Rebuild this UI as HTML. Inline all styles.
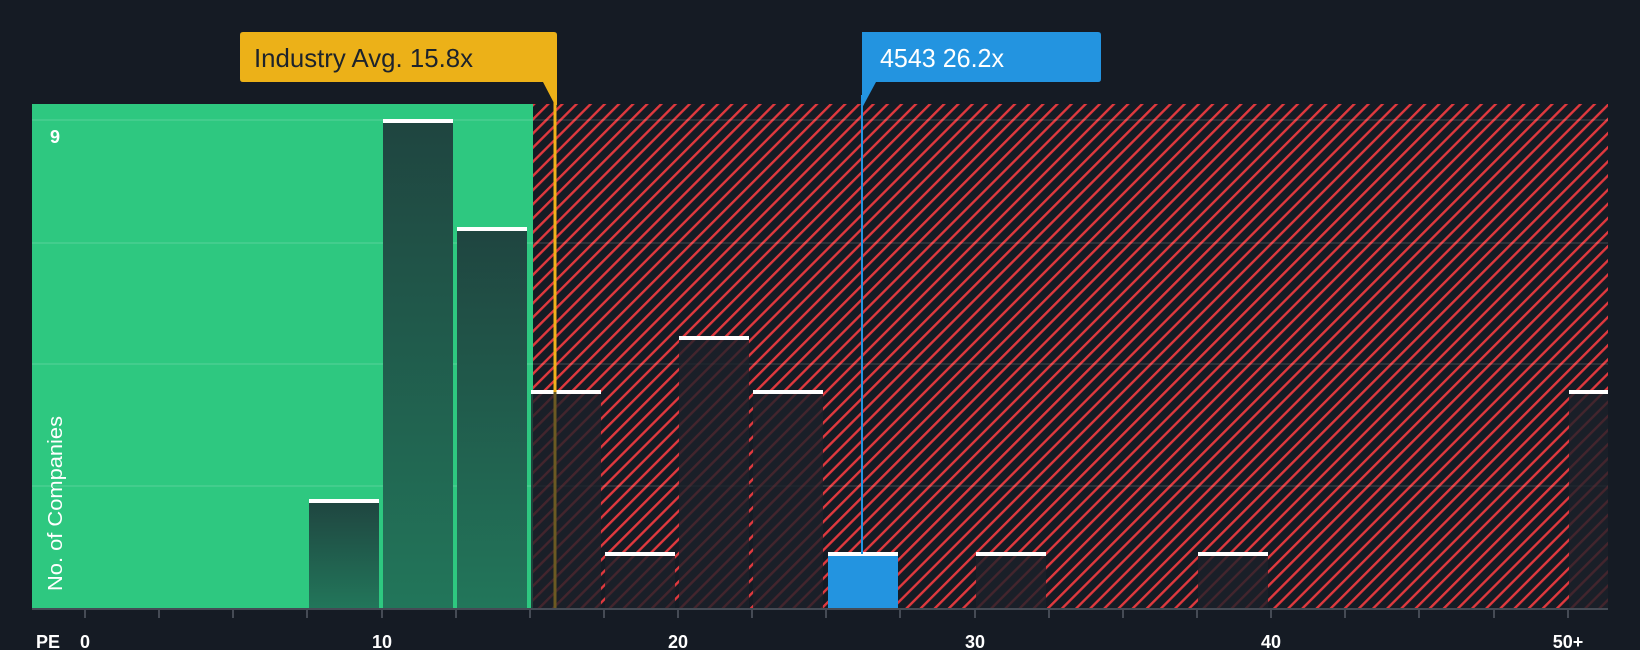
<!DOCTYPE html>
<html><head><meta charset="utf-8"><style>
html,body{margin:0;padding:0;background:#151b24;width:1640px;height:650px;overflow:hidden}
svg{display:block}
text{font-family:"Liberation Sans",sans-serif}
</style></head><body>
<svg width="1640" height="650" viewBox="0 0 1640 650" xmlns="http://www.w3.org/2000/svg">
<defs>
<pattern id="h" patternUnits="userSpaceOnUse" width="10" height="10" patternTransform="rotate(45)">
<rect width="10" height="10" fill="#151b24"/>
<rect x="0" y="0" width="2.4" height="10" fill="#e0393e"/>
</pattern>
<linearGradient id="g" x1="0" y1="0" x2="0" y2="1">
<stop offset="0" stop-color="#1f4540"/><stop offset="1" stop-color="#22765a"/>
</linearGradient>
</defs>
<rect x="32" y="104" width="501" height="505" fill="#2ec880"/>
<rect x="533" y="104" width="1075" height="505" fill="url(#h)"/>
<g stroke="#ffffff" stroke-opacity="0.1" stroke-width="2">
<line x1="32" y1="120" x2="1608" y2="120"/><line x1="32" y1="243" x2="1608" y2="243"/>
<line x1="32" y1="364" x2="1608" y2="364"/><line x1="32" y1="486" x2="1608" y2="486"/>
</g>
<rect x="309" y="501" width="70" height="107" fill="url(#g)"/>
<rect x="383" y="121" width="70" height="487" fill="url(#g)"/>
<rect x="457" y="229" width="70" height="379" fill="url(#g)"/>
<g fill="#1c2029" fill-opacity="0.8">
<rect x="531" y="392" width="70" height="216"/>
<rect x="605" y="554" width="70" height="54"/>
<rect x="679" y="338" width="70" height="270"/>
<rect x="753" y="392" width="70" height="216"/>
<rect x="976" y="554" width="70" height="54"/>
<rect x="1198" y="554" width="70" height="54"/>
<rect x="1569" y="392" width="39" height="216"/>
</g>
<rect x="828" y="554" width="70" height="54" fill="#2394e0"/>
<g fill="#ffffff">
<rect x="309" y="499" width="70" height="4"/>
<rect x="383" y="119" width="70" height="4"/>
<rect x="457" y="227" width="70" height="4"/>
<rect x="531" y="390" width="70" height="4"/>
<rect x="605" y="552" width="70" height="4"/>
<rect x="679" y="336" width="70" height="4"/>
<rect x="753" y="390" width="70" height="4"/>
<rect x="828" y="552" width="70" height="4"/>
<rect x="976" y="552" width="70" height="4"/>
<rect x="1198" y="552" width="70" height="4"/>
<rect x="1569" y="390" width="39" height="4"/>
</g>
<line x1="555" y1="82" x2="555" y2="392" stroke="#f0b21b" stroke-width="3"/>
<line x1="555" y1="392" x2="555" y2="608" stroke="#6b5a22" stroke-width="3"/>
<path d="M243 32 H554 Q557 32 557 35 V105 L555 105 L543 82 H243 Q240 82 240 79 V35 Q240 32 243 32 Z" fill="#ecb118"/>
<text x="254" y="67" font-size="26" fill="#1d232c" textLength="219" lengthAdjust="spacingAndGlyphs">Industry Avg. 15.8x</text>
<line x1="862" y1="95" x2="862" y2="554" stroke="#2394e0" stroke-width="2"/>
<path d="M862 32 H1098 Q1101 32 1101 35 V79 Q1101 82 1098 82 H876 L862 108 Z" fill="#2394e0"/>
<text x="880" y="67" font-size="26" fill="#ffffff" textLength="124" lengthAdjust="spacingAndGlyphs">4543 26.2x</text>
<line x1="32" y1="609" x2="1608" y2="609" stroke="#454b55" stroke-width="2"/>
<g stroke="#454b55" stroke-width="2">
<line x1="85" y1="609" x2="85" y2="618"/><line x1="159" y1="609" x2="159" y2="618"/>
<line x1="233" y1="609" x2="233" y2="618"/><line x1="307" y1="609" x2="307" y2="618"/>
<line x1="382" y1="609" x2="382" y2="618"/><line x1="456" y1="609" x2="456" y2="618"/>
<line x1="530" y1="609" x2="530" y2="618"/><line x1="604" y1="609" x2="604" y2="618"/>
<line x1="678" y1="609" x2="678" y2="618"/><line x1="752" y1="609" x2="752" y2="618"/>
<line x1="826" y1="609" x2="826" y2="618"/><line x1="900" y1="609" x2="900" y2="618"/>
<line x1="975" y1="609" x2="975" y2="618"/><line x1="1049" y1="609" x2="1049" y2="618"/>
<line x1="1123" y1="609" x2="1123" y2="618"/><line x1="1197" y1="609" x2="1197" y2="618"/>
<line x1="1271" y1="609" x2="1271" y2="618"/><line x1="1345" y1="609" x2="1345" y2="618"/>
<line x1="1419" y1="609" x2="1419" y2="618"/><line x1="1494" y1="609" x2="1494" y2="618"/>
<line x1="1568" y1="609" x2="1568" y2="618"/>
</g>
<g fill="#ffffff" font-size="18" font-weight="bold">
<text x="36" y="648">PE</text>
<text x="85" y="648" text-anchor="middle">0</text>
<text x="382" y="648" text-anchor="middle">10</text>
<text x="678" y="648" text-anchor="middle">20</text>
<text x="975" y="648" text-anchor="middle">30</text>
<text x="1271" y="648" text-anchor="middle">40</text>
<text x="1568" y="648" text-anchor="middle">50+</text>
<text x="50" y="143">9</text>
</g>
<text transform="translate(62,591) rotate(-90)" font-size="20" fill="#ffffff" textLength="175" lengthAdjust="spacingAndGlyphs">No. of Companies</text>
</svg>
</body></html>
